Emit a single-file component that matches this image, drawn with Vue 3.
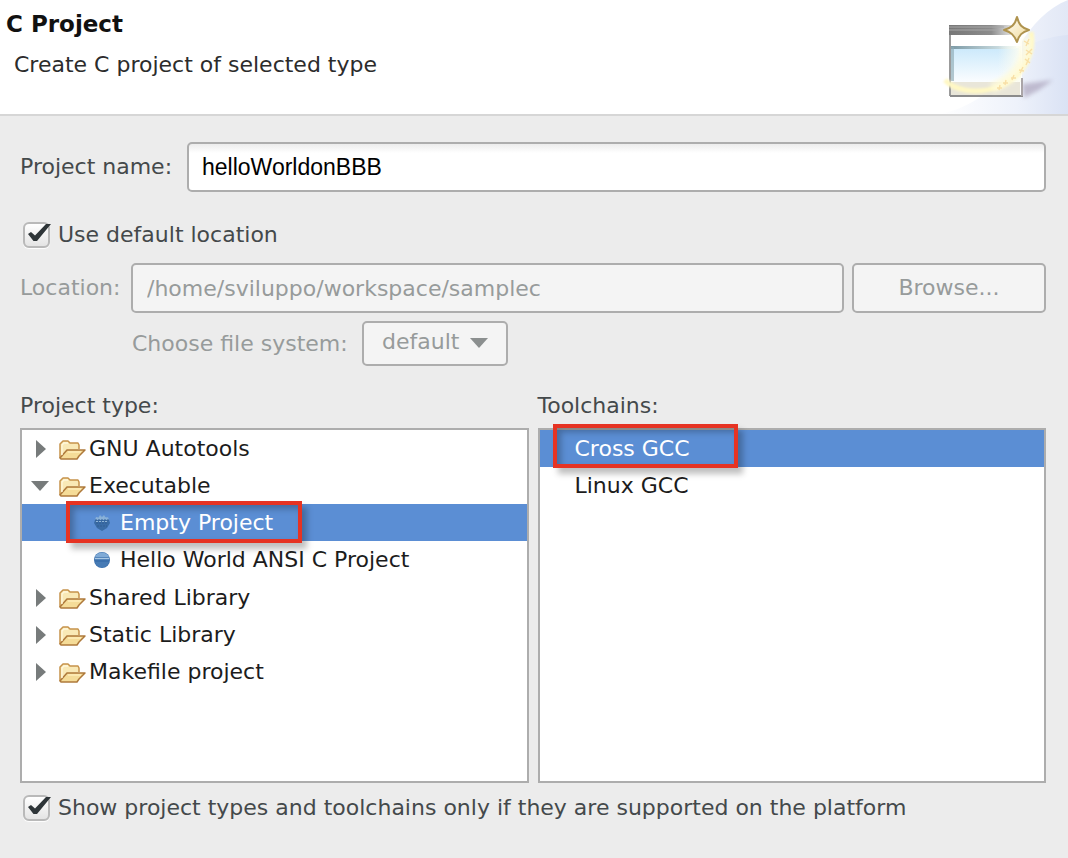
<script setup>
import { ref } from 'vue'

const projectName = ref('helloWorldonBBB')
const location = ref('/home/sviluppo/workspace/samplec')
const fileSystem = ref('default')
const useDefault = ref(true)
const onlySupported = ref(true)
const selectedType = ref('Empty Project')
const selectedToolchain = ref('Cross GCC')

const types = [
  { name: 'GNU Autotools', kind: 'folder', open: false },
  { name: 'Executable', kind: 'folder', open: true },
  { name: 'Empty Project', kind: 'leaf', marked: true },
  { name: 'Hello World ANSI C Project', kind: 'leaf' },
  { name: 'Shared Library', kind: 'folder', open: false },
  { name: 'Static Library', kind: 'folder', open: false },
  { name: 'Makefile project', kind: 'folder', open: false },
]
const toolchains = [
  { name: 'Cross GCC', marked: true },
  { name: 'Linux GCC' },
]
</script>

<template>
  <main class="dialog">
    <header class="banner">
      <div class="heading">
        <h1>C Project</h1>
        <p>Create C project of selected type</p>
      </div>
      <svg class="art" viewBox="0 0 148 114" aria-hidden="true">
        <defs>
          <linearGradient id="sky" x1="0" y1="0" x2="1" y2="0">
            <stop offset="0" stop-color="#fff" />
            <stop offset=".6" stop-color="#eef2fb" />
            <stop offset="1" stop-color="#dae2f4" />
          </linearGradient>
          <linearGradient id="beam" x1="0" y1="0" x2="1" y2="0">
            <stop offset="0" stop-color="#fafbfe" />
            <stop offset="1" stop-color="#e2e8f6" />
          </linearGradient>
          <linearGradient id="bar" x1="0" y1="0" x2="1" y2="0">
            <stop offset="0" stop-color="#777" />
            <stop offset=".65" stop-color="#8c8c8c" />
            <stop offset="1" stop-color="#eee" />
          </linearGradient>
          <linearGradient id="pane" x1="0" y1="0" x2="0" y2="1">
            <stop offset="0" stop-color="#cbe9fb" />
            <stop offset="1" stop-color="#fbfdff" />
          </linearGradient>
          <linearGradient id="haze" x1="0" y1="0" x2="1" y2="0">
            <stop offset="0" stop-color="#fcfdf2" stop-opacity="0" />
            <stop offset="1" stop-color="#fcfdf2" />
          </linearGradient>
          <linearGradient id="edge" x1="0" y1="0" x2="1" y2="0">
            <stop offset="0" stop-color="#7c9aa6" />
            <stop offset="1" stop-color="#e3f1f3" />
          </linearGradient>
          <linearGradient id="gold" x1="0" y1="0" x2="1" y2="1">
            <stop offset="0" stop-color="#fff" />
            <stop offset="1" stop-color="#f0d995" />
          </linearGradient>
          <filter id="soft" x="-30%" y="-30%" width="160%" height="160%"><feGaussianBlur stdDeviation="2" /></filter>
          <filter id="fine" x="-30%" y="-30%" width="160%" height="160%"><feGaussianBlur stdDeviation="1" /></filter>
        </defs>
        <path d="M100 45C112 24 128 8 148 0V114H60Z" fill="url(#beam)" />
        <path d="M103 48C116 41 132 36 148 35V114H20C50 108 80 90 103 48Z" fill="url(#sky)" />
        <path d="M102 84L133 80L119 90L104 98Z" fill="#a79fb8" opacity=".65" filter="url(#soft)" />
        <path d="M25 98H108" stroke="#a9a3ad" stroke-width="2" filter="url(#fine)" />
        <path d="M30 26H102V96H30Z" fill="#fff" />
        <path d="M30 34V96" stroke="#9b9b9b" stroke-width="2" />
        <path d="M29 25H94V35H29Z" fill="url(#bar)" />
        <path d="M29 27H84M29 30H78" stroke="#a7a7a7" />
        <path d="M31 48H99V82H31Z" fill="url(#pane)" />
        <path d="M31 46H96V49H31Z" fill="url(#edge)" />
        <path d="M31 47H34V81H31Z" fill="#8daab5" opacity=".65" />
        <path d="M78 46H101V82H78Z" fill="url(#haze)" />
        <path d="M31 82H100V95H31Z" fill="#e9e6d9" />
        <path d="M30 96H103" stroke="#8b8b8b" stroke-width="2" />
        <path d="M102 78V96" stroke="#aaa5a8" stroke-width="2" />
        <path d="M111 32C115 55 101 78 78 87C55 95 34 90 25 80" fill="none" stroke="#fff8c4" stroke-width="5" filter="url(#fine)" />
        <path d="M107 38C109 59 97 78 72 88" fill="none" stroke="#fffbd9" stroke-width="10" opacity=".8" filter="url(#soft)" />
        <g fill="none" stroke="#f8dfa6" stroke-width="1.4">
          <path d="M104 41l5 3M109 39l-3 7M106 50l6 4M112 49l-6 6M105 59l5 4M109 58l-3 7M99 70l5 1M103 67l-3 6M91 78l5 0M94 75l-2 5M83 83l5 0M86 80l-1 5M77 88l5 0M80 85l-1 5" />
        </g>
        <path d="M97 17C99 25 102 28 109 30C102 32 99 35 97 42C94 35 91 32 84 30C91 28 95 25 97 17Z" fill="url(#gold)" stroke="#af934e" stroke-width="2" stroke-linejoin="round" />
      </svg>
    </header>

    <form class="form" @submit.prevent>
      <div class="row">
        <label class="name-label" for="name">Project name:</label>
        <input id="name" v-model="projectName" class="field name" type="text" />
      </div>

      <label class="check first">
        <span class="box">
          <input v-model="useDefault" type="checkbox" />
          <svg v-if="useDefault" viewBox="0 0 30 30" aria-hidden="true">
            <path d="M6 12L9 10L13 13.500L24 2H29L15 19H11.500Z" fill="#2e3538" />
          </svg>
        </span>
        <span>Use default location</span>
      </label>

      <div class="row off place">
        <label class="place-label" for="location">Location:</label>
        <input id="location" v-model="location" class="field" type="text" disabled />
        <button class="browse" type="button" disabled>Browse...</button>
      </div>

      <div class="row off system">
        <label class="system-label" for="fs">Choose file system:</label>
        <span class="drop">
          <select id="fs" v-model="fileSystem" disabled>
            <option>default</option>
          </select>
          <svg viewBox="0 0 18 10" aria-hidden="true"><path d="M0 0H18L9 10Z" fill="#8b8f8f" /></svg>
        </span>
      </div>

      <div class="panes">
        <section class="pane">
          <h2 id="types-label">Project type:</h2>
          <ul class="list tree" role="tree" aria-labelledby="types-label">
            <li
              v-for="t in types"
              :key="t.name"
              role="treeitem"
              :aria-selected="t.name === selectedType"
              :class="{ selected: t.name === selectedType }"
            >
              <button type="button" class="item" :class="t.kind" @click="selectedType = t.name">
                <template v-if="t.kind === 'folder'">
                  <svg class="arrow" viewBox="0 0 20 20" aria-hidden="true">
                    <path v-if="t.open" d="M1 5H19L10 15Z" fill="#777b7b" />
                    <path v-else d="M6 1V19L16 10Z" fill="#777b7b" />
                  </svg>
                  <svg class="folder-icon" viewBox="0 0 28 24" aria-hidden="true">
                    <path d="M2 21V7L4 5L5 4H10L12 6H20L21 8V12" fill="#f9e9b6" stroke="#c6934b" stroke-width="1.500" stroke-linejoin="round" />
                    <path d="M2 21L9 13H27L21 19L19 22H3Z" fill="#f5dc98" stroke="#ae793b" stroke-width="1.500" stroke-linejoin="round" />
                    <path d="M4 18V8L6 6H10" fill="none" stroke="#fff8dc" stroke-width="1.300" />
                    <path d="M10 15H23" stroke="#fff0bf" stroke-width="1.300" />
                  </svg>
                </template>
                <svg v-else class="dot" viewBox="0 0 18 18" aria-hidden="true">
                  <template v-if="t.name === selectedType">
                    <path d="M2 6H16L17 9L14 14L9 17L4 14L1 9Z" fill="#3a6ca6" />
                    <path d="M3 3L5 4L7 1L9 3L11 1L13 4L15 3L16 6H2Z" fill="#86afd8" />
                    <path d="M2 6H16M3 9H15M4 12H14" stroke="#335f94" stroke-dasharray="2 1" />
                    <path d="M3 4H15M3 7.500H15" stroke="#91b5d7" stroke-dasharray="2 1" />
                  </template>
                  <template v-else>
                    <circle cx="9" cy="9" r="8" fill="#3b70ad" />
                    <path d="M2 6C4 0 14 0 16 6Z" fill="#7faad6" />
                    <path d="M2 7.500H16" stroke="#a9c8e4" stroke-width="1.500" />
                    <path d="M2 11C4 18 14 18 16 11Z" fill="#477bb5" />
                  </template>
                </svg>
                <span>{{ t.name }}</span>
              </button>
              <span v-if="t.marked" class="mark" aria-hidden="true"></span>
            </li>
          </ul>
        </section>

        <section class="pane">
          <h2 id="tools-label">Toolchains:</h2>
          <ul class="list tools" role="listbox" aria-labelledby="tools-label">
            <li
              v-for="t in toolchains"
              :key="t.name"
              role="option"
              :aria-selected="t.name === selectedToolchain"
              :class="{ selected: t.name === selectedToolchain }"
            >
              <button type="button" class="item" @click="selectedToolchain = t.name">{{ t.name }}</button>
              <span v-if="t.marked" class="mark" aria-hidden="true"></span>
            </li>
          </ul>
        </section>
      </div>

      <label class="check last">
        <span class="box">
          <input v-model="onlySupported" type="checkbox" />
          <svg v-if="onlySupported" viewBox="0 0 30 30" aria-hidden="true">
            <path d="M6 12L9 10L13 13.500L24 2H29L15 19H11.500Z" fill="#2e3538" />
          </svg>
        </span>
        <span>Show project types and toolchains only if they are supported on the platform</span>
      </label>
    </form>
  </main>
</template>

<style>
body {
  margin: 0;
  background: #ececec;
}
</style>

<style scoped>
.dialog {
  display: flex;
  flex-direction: column;
  min-height: 100vh;
  box-sizing: border-box;
  background: #ececec;
  color: #44494b;
  font: 22px/26px "DejaVu Sans", sans-serif;
}
.dialog * {
  box-sizing: border-box;
}
.banner {
  display: flex;
  justify-content: space-between;
  background: #fff;
  border-bottom: 2px solid #d6d6d6;
}
.heading {
  padding: 11px 0 0 6px;
}
h1,
h2,
p {
  margin: 0;
  font-size: 22px;
  line-height: 26px;
}
h1 {
  color: #111;
  font-size: 23px;
}
.heading p {
  padding: 15px 0 0 8px;
  color: #2c2c2c;
}
.art {
  width: 148px;
  height: 114px;
}
.form {
  display: flex;
  flex: 1;
  flex-direction: column;
  padding: 26px 22px 37px 20px;
}
.row {
  display: flex;
  align-items: center;
  gap: 8px;
}
.name-label {
  min-width: 159px;
}
.place-label {
  min-width: 103px;
}
.system-label {
  min-width: 222px;
}
.field {
  flex: 1;
  min-width: 0;
  height: 50px;
  padding: 0 14px;
  border: 2px solid #adadad;
  border-radius: 5px;
  background: #f4f4f4;
  color: #979b9b;
  font: inherit;
}
.name {
  padding: 0 13px;
  background: linear-gradient(#ececec, #fff 9px);
  color: #000;
  font: 23px "Liberation Sans", Arial, sans-serif;
}
.check {
  display: flex;
  align-items: center;
  align-self: flex-start;
  gap: 8px;
}
.first {
  margin-top: 30px;
}
.box {
  position: relative;
  display: flex;
  padding-left: 3px;
}
.box input {
  appearance: none;
  width: 27px;
  height: 26px;
  margin: 0;
  border: 2px solid #b9b9b9;
  border-radius: 6px;
  background: linear-gradient(#fff, #e4e4e4);
  box-shadow: 0 1px 1px #fff;
}
.box svg {
  position: absolute;
  left: 2px;
  top: 0;
  width: 30px;
  height: 30px;
  pointer-events: none;
}
.off {
  color: #979b9b;
}
.place {
  margin-top: 15px;
}
.browse {
  width: 194px;
  height: 50px;
  padding: 0;
  border: 2px solid #adadad;
  border-radius: 5px;
  background: #f4f4f4;
  color: #979b9b;
  font: inherit;
}
.system {
  margin: 8px 0 0 112px;
}
.drop {
  position: relative;
}
.drop select {
  display: block;
  appearance: none;
  height: 45px;
  padding: 0 46px 4px 18px;
  border: 2px solid #adadad;
  border-radius: 5px;
  background: #f4f4f4;
  color: #979b9b;
  font: inherit;
  opacity: 1;
}
.drop svg {
  position: absolute;
  right: 20px;
  top: 17px;
  width: 18px;
  height: 10px;
  pointer-events: none;
}
.panes {
  display: grid;
  flex: 1;
  grid-template-columns: 1fr 1fr;
  gap: 9px;
  margin-top: 27px;
}
.pane {
  display: flex;
  flex-direction: column;
}
h2 {
  font-weight: 400;
}
.list {
  flex: 1;
  margin: 9px 0 0;
  padding: 0;
  border: 2px solid #adadad;
  background: #fff;
  color: #1c1c1c;
  list-style: none;
}
.list li {
  position: relative;
  height: 37px;
}
.list li:nth-child(4n) {
  height: 38px;
}
.item {
  display: flex;
  align-items: center;
  width: 100%;
  height: 100%;
  padding: 0 0 0 8px;
  border: 0;
  background: none;
  color: inherit;
  font: inherit;
  text-align: left;
  white-space: nowrap;
}
.selected {
  background: #5b8ed4;
  color: #fff;
}
.arrow {
  width: 20px;
  height: 20px;
  margin-right: 8px;
}
.folder-icon {
  width: 28px;
  height: 24px;
  margin-right: 3px;
}
.leaf {
  padding-left: 71px;
}
.dot {
  width: 18px;
  height: 18px;
  margin-right: 9px;
}
.tools .item {
  padding-left: 35px;
}
.mark {
  position: absolute;
  top: -3px;
  left: 44px;
  width: 236px;
  height: 42px;
  border: 4px solid #e63323;
  box-shadow: 5px 6px 6px rgba(0, 0, 0, 0.25), inset 4px 4px 6px rgba(0, 0, 0, 0.25);
  pointer-events: none;
}
.tools .mark {
  top: -6px;
  left: 13px;
  width: 185px;
  height: 44px;
}
.last {
  margin-top: 12px;
}
</style>
